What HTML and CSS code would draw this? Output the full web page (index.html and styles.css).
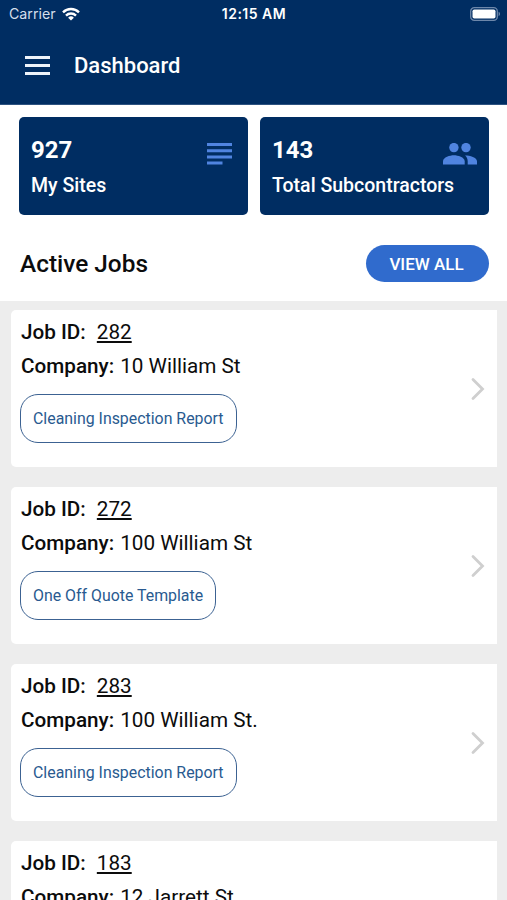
FILE: index.html
```html
<!DOCTYPE html>
<html lang="en">
<head>
    <meta charset="UTF-8">
    <meta name="viewport" content="width=device-width, initial-scale=1.0">
    <title>Dashboard</title>
    <link rel="stylesheet" href="styles.css">
</head>
<body>
<header class="header">
    <div class="status-bar">
        <div class="status-left">
            <span class="carrier">Carrier</span>
            <svg class="wifi" viewBox="0 0 18 14" width="18" height="14">
                <g fill="none" stroke="#fff" stroke-width="2.4">
                    <path d="M1 5.3a11.4 11.4 0 0 1 16 0"/>
                    <path d="M4 8.6a7.1 7.1 0 0 1 10 0"/>
                </g>
                <path d="M9 13.6l-2.9-2.9a4.1 4.1 0 0 1 5.8 0z" fill="#fff"/>
            </svg>
        </div>
        <span class="time">12:15 AM</span>
        <svg class="battery" viewBox="0 0 31 14" width="31" height="14">
            <rect x=".7" y=".7" width="26.6" height="12.6" rx="3.6" fill="none" stroke="#6d87aa" stroke-width="1.3"/>
            <rect x="2.5" y="2.5" width="23" height="9" rx="1.8" fill="#fff"/>
            <path d="M28.6 4.8v4.4a2.4 2.4 0 0 0 0-4.4z" fill="#6d87aa"/>
        </svg>
    </div>
    <div class="nav-bar">
        <div class="menu">
            <span class="menu-line"></span>
            <span class="menu-line"></span>
            <span class="menu-line"></span>
        </div>
        <h1 class="nav-title">Dashboard</h1>
    </div>
</header>

<section class="stats">
    <div class="stat-card">
        <div class="stat-number">927</div>
        <div class="stat-label">My Sites</div>
        <svg class="stat-icon icon-list" viewBox="0 0 25 22" width="25" height="22">
            <path d="M0 0h25v3H0zM0 6.2h25v3H0zM0 12.4h25v3H0zM0 18.6h15.5v3H0z"/>
        </svg>
    </div>
    <div class="stat-card">
        <div class="stat-number">143</div>
        <div class="stat-label">Total Subcontractors</div>
        <svg class="stat-icon icon-people" viewBox="0 0 34 22" width="34" height="22">
            <circle cx="10.9" cy="4.6" r="4.7"/>
            <circle cx="23" cy="4.6" r="4.7"/>
            <path d="M0 21.5v-3.3c0-4 7-6 10.9-6s10.8 2 10.8 6v3.3z"/>
            <path d="M22 12.4c5 0 12 1.8 12 5.8v3.3h-9.3v-3.3c0-2.6-1-4.5-2.7-5.8z"/>
        </svg>
    </div>
</section>

<section class="jobs-header">
    <h2 class="jobs-title">Active Jobs</h2>
    <button class="view-all" type="button">VIEW ALL</button>
</section>

<main class="jobs">
    <article class="job-card">
        <div class="job-info">
            <p class="job-row"><span class="job-key key-id">Job ID:</span><a class="job-id">282</a></p>
            <p class="job-row"><span class="job-key">Company:</span><span class="job-value">10 William St</span></p>
            <span class="job-tag">Cleaning Inspection Report</span>
        </div>
        <svg class="chevron" viewBox="0 0 14 24" width="14" height="24"><path d="M2 2.5L11.5 12 2 21.5"/></svg>
    </article>
    <article class="job-card">
        <div class="job-info">
            <p class="job-row"><span class="job-key key-id">Job ID:</span><a class="job-id">272</a></p>
            <p class="job-row"><span class="job-key">Company:</span><span class="job-value">100 William St</span></p>
            <span class="job-tag">One Off Quote Template</span>
        </div>
        <svg class="chevron" viewBox="0 0 14 24" width="14" height="24"><path d="M2 2.5L11.5 12 2 21.5"/></svg>
    </article>
    <article class="job-card">
        <div class="job-info">
            <p class="job-row"><span class="job-key key-id">Job ID:</span><a class="job-id">283</a></p>
            <p class="job-row"><span class="job-key">Company:</span><span class="job-value">100 William St.</span></p>
            <span class="job-tag">Cleaning Inspection Report</span>
        </div>
        <svg class="chevron" viewBox="0 0 14 24" width="14" height="24"><path d="M2 2.5L11.5 12 2 21.5"/></svg>
    </article>
    <article class="job-card">
        <div class="job-info">
            <p class="job-row"><span class="job-key key-id">Job ID:</span><a class="job-id">183</a></p>
            <p class="job-row"><span class="job-key">Company:</span><span class="job-value">12 Jarrett St</span></p>
        </div>
    </article>
</main>
</body>
</html>
```

FILE: styles.css
```css
* {
    box-sizing: border-box;
    margin: 0;
    padding: 0;
}
body {
    display: flex;
    flex-direction: column;
    height: 900px;
    overflow: hidden;
    background: #fff;
    color: #0c0c0c;
    font-family: Roboto, "Liberation Sans", sans-serif;
}

/* header */
.header {
    flex: none;
    height: 105px;
    background: #002d62;
    border-bottom: 1px solid #2d5280;
    color: #fff;
}
.status-bar {
    display: grid;
    grid-template-columns: 1fr auto 1fr;
    align-items: center;
    height: 27px;
    padding: 0 6px 0 9px;
    font-family: Inter, sans-serif;
}
.status-left {
    display: flex;
    align-items: center;
    gap: 6px;
}
.carrier {
    color: #d5dfeb;
    font-size: 14.2px;
}
.time {
    margin-right: 2px;
    font-size: 14px;
    font-weight: 600;
    letter-spacing: 0.5px;
}
.battery {
    justify-self: end;
}
.nav-bar {
    display: flex;
    align-items: center;
    height: 76px;
    padding-left: 25px;
}
.menu {
    display: flex;
    flex-direction: column;
    gap: 5px;
    width: 25px;
    padding-top: 1px;
}
.menu-line {
    height: 3px;
    background: #eef4fb;
}
.nav-title {
    margin-left: 24px;
    font-size: 22px;
    font-weight: 500;
}

/* stats */
.stats {
    flex: none;
    display: flex;
    gap: 12px;
    padding: 12px 18px 0 19px;
}
.stat-card {
    position: relative;
    flex: 1;
    height: 98px;
    padding: 18px 12px;
    border-radius: 5px;
    background: #002d62;
    color: #fff;
}
.stat-number {
    font-size: 24px;
    font-weight: 700;
    line-height: 30px;
}
.stat-label {
    margin-top: 8px;
    font-size: 19.5px;
    font-weight: 500;
    line-height: 26px;
    white-space: nowrap;
}
.stat-icon {
    position: absolute;
    top: 26px;
    fill: #5084e0;
}
.icon-list {
    right: 16px;
}
.icon-people {
    right: 12px;
}

/* active jobs */
.jobs-header {
    flex: none;
    display: flex;
    align-items: center;
    justify-content: space-between;
    height: 86px;
    padding: 11px 18px 0 20px;
}
.jobs-title {
    font-size: 24.4px;
    font-weight: 500;
}
.view-all {
    width: 123px;
    height: 37px;
    padding-right: 2px;
    border: none;
    border-radius: 19px;
    background: #306bcd;
    color: #fff;
    font-family: inherit;
    font-size: 17px;
    font-weight: 500;
}
.jobs {
    flex: 1;
    min-height: 0;
    padding: 9px 10px 0 11px;
    overflow: hidden;
    background: #ededed;
}
.job-card {
    display: flex;
    align-items: center;
    justify-content: space-between;
    height: 157px;
    margin-bottom: 20px;
    padding: 0 12px 0 10px;
    border-radius: 5px 0 0 5px;
    background: #fff;
}
.job-info {
    align-self: flex-start;
    padding-top: 5px;
}
.job-row {
    display: flex;
    height: 34px;
    font-size: 20.7px;
    line-height: 34px;
}
.job-key {
    margin-right: 6px;
    font-weight: 500;
}
.key-id {
    margin-right: 11px;
}
.job-id {
    text-decoration: underline;
    text-decoration-thickness: 1.5px;
    text-underline-offset: 2px;
}
.job-tag {
    display: inline-block;
    height: 49px;
    margin: 11px 0 0 -1px;
    padding: 0 12px;
    border: 1.5px solid #3c6292;
    border-radius: 18px;
    color: #295a90;
    font-size: 15.9px;
    line-height: 47px;
}
.chevron {
    fill: none;
    stroke: #cfcfcf;
    stroke-width: 2.8;
    stroke-linecap: round;
}
```
